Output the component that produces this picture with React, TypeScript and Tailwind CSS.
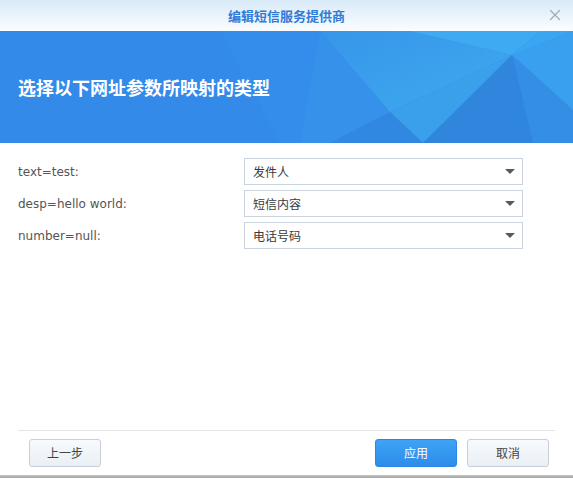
import { X } from "lucide-react";

const rows = [
  { label: "text=test:", value: "发件人" },
  { label: "desp=hello world:", value: "短信内容" },
  { label: "number=null:", value: "电话号码" },
];

const cjk = "font-['DejaVu_Sans','Noto_Sans_CJK_SC',sans-serif]";

function Banner() {
  // faceted background drawn as polygons
  return (
    <svg className="absolute inset-0" width="573" height="112" viewBox="0 0 573 112" preserveAspectRatio="none">
      <defs>
        <linearGradient id="mid" x1="0" y1="0" x2="1" y2="1">
          <stop offset="0" stopColor="#3795ea" />
          <stop offset="1" stopColor="#3eabef" />
        </linearGradient>
      </defs>
      <rect width="573" height="112" fill="#338ae9" />
      <polygon points="220,0 330,0 300,112 280,112" fill="#3590ec" opacity="0.5" />
      <polygon points="320,0 410,0 512,24 390,81" fill="url(#mid)" />
      <polygon points="410,0 512,24 540,0" fill="#3eaaf1" />
      <polygon points="512,24 573,0 573,79" fill="#39a0ef" />
      <polygon points="540,0 573,0 512,24" fill="#3aa6f2" />
      <polygon points="512,24 573,79 573,112 533,112" fill="#348fe4" />
      <polygon points="390,81 512,24 423,112" fill="#3aa0ec" />
      <polygon points="512,24 533,112 423,112" fill="#3086dd" />
      <polygon points="390,81 423,112 330,112" fill="#3188e0" />
      <polygon points="320,0 390,81 330,112 300,112" fill="#3591e9" />
    </svg>
  );
}

export default function App() {
  return (
    <div className={`w-[573px] h-[478px] relative overflow-hidden bg-white flex flex-col ${cjk}`}>
      {/* title bar */}
      <div className="h-[31px] shrink-0 relative flex items-center justify-center bg-gradient-to-b from-[#d9eaf8] to-[#fbfdff]">
        <span className="text-[13px] font-bold text-[#2f7bd6] font-['Noto_Sans_CJK_SC',sans-serif]">编辑短信服务提供商</span>
        <X className="absolute right-[9px] top-[6px] w-[18px] h-[18px] text-[#a3abb3]" strokeWidth={1.75} />
      </div>

      {/* banner */}
      <div className="h-[112px] shrink-0 relative flex items-center px-[18px]">
        <Banner />
        <h1 className="relative text-[18px] font-bold text-white font-['Noto_Sans_CJK_SC',sans-serif]">选择以下网址参数所映射的类型</h1>
      </div>

      {/* mapping rows */}
      <div className="flex-1 pt-[15px] flex flex-col gap-[5px]">
        {rows.map((r) => (
          <div key={r.label} className="flex items-center h-[27px] pl-[18px]">
            <span className="w-[226px] text-[12px] text-[#555]">{r.label}</span>
            <div className="w-[279px] h-[27px] border border-[#c9d4df] bg-white flex items-center justify-between pl-[8px] pr-[7px]">
              <span className="text-[12px] text-[#3a3a3a] font-['Noto_Sans_CJK_SC',sans-serif]">{r.value}</span>
              <svg width="10" height="5" viewBox="0 0 10 5">
                <polygon points="0,0 10,0 5,5" fill="#555b61" />
              </svg>
            </div>
          </div>
        ))}
      </div>

      {/* footer */}
      <div className="shrink-0 mx-[18px] border-t border-[#e1e5ea]" />
      <div className="shrink-0 h-[44px] flex items-start pt-[8px] pl-[29px] pr-[24px] font-['Noto_Sans_CJK_SC',sans-serif]">
        <button className="w-[72px] h-[28px] rounded-[3px] border border-[#c5d0da] bg-gradient-to-b from-[#f8fafc] to-[#e9eff5] text-[12px] text-[#444]">上一步</button>
        <div className="flex-1" />
        <button className="w-[82px] h-[28px] rounded-[3px] border border-[#2a86e0] bg-gradient-to-b from-[#3ea3f7] to-[#2d8ce9] text-[12px] text-white">应用</button>
        <button className="ml-[10px] w-[82px] h-[28px] rounded-[3px] border border-[#c5d0da] bg-gradient-to-b from-[#f8fafc] to-[#e9eff5] text-[12px] text-[#444]">取消</button>
      </div>
      <div className="shrink-0 h-[3px] bg-gradient-to-b from-[#c4c4c4] to-[#a5a5a5]" />
    </div>
  );
}
